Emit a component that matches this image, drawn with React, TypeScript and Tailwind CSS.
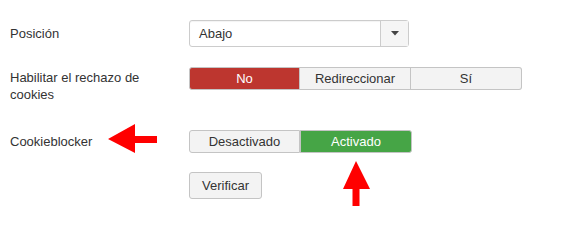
import React from 'react';

const font = { fontFamily: '"Liberation Sans", Arial, sans-serif' };

const btn =
  'flex h-[23px] w-[111px] items-center justify-center border border-[#c4c4c4] text-[13px]';

export default function App() {
  return (
    <div
      className="relative h-[247px] w-[575px] bg-white pl-[10px] pt-[20px] text-[13px] text-[#333]"
      style={font}
    >
      {/* Posición */}
      <div className="flex h-[27px] items-center">
        <div className="w-[179px]">Posición</div>
        <div className="flex h-[27px] w-[220px] items-stretch rounded-[3px] border border-[#ccc] shadow-[inset_0_1px_1px_rgba(0,0,0,0.05)]">
          <div className="flex flex-1 items-center pl-[9px]">Abajo</div>
          <div className="flex w-[28px] items-center justify-center border-l border-[#ccc] bg-[#f5f5f5]">
            <svg width="8" height="5" viewBox="0 0 8 5">
              <path d="M0 0h8L4 4.5z" fill="#444" />
            </svg>
          </div>
        </div>
      </div>

      {/* Rechazo de cookies */}
      <div className="mt-[20px] flex items-start">
        <div className="w-[179px] pt-[2px] leading-[17px]">
          Habilitar el rechazo de
          <br />
          cookies
        </div>
        <div className="flex">
          <div className={`${btn} rounded-l-[3px] border-[#a52a22] bg-[#bd362f] text-white`}>No</div>
          <div className={`${btn} border-l-0 bg-[#f3f3f3]`}>Redireccionar</div>
          <div className={`${btn} rounded-r-[3px] border-l-0 bg-[#f3f3f3]`}>Sí</div>
        </div>
      </div>

      {/* Cookieblocker */}
      <div className="mt-[27px] flex items-center">
        <div className="w-[179px]">Cookieblocker</div>
        <div className="flex">
          <div className={`${btn} rounded-l-[3px] bg-[#f3f3f3]`}>Desactivado</div>
          <div className={`${btn} w-[112px] rounded-r-[3px] border-[#3d8b3d] bg-[#46a546] text-white`}>
            Activado
          </div>
        </div>
      </div>

      <div className="mt-[19px] flex">
        <div className="w-[179px]" />
        <div className="flex h-[27px] w-[73px] items-center justify-center rounded-[3px] border border-[#c4c4c4] bg-[#f3f3f3]">
          Verificar
        </div>
      </div>

      {/* Red arrows */}
      <svg className="absolute left-[106px] top-[122px]" width="54" height="32" viewBox="0 0 54 32">
        <path d="M2 17L29 2V14H51V21H29V31Z" fill="#ff0000" />
      </svg>
      <svg className="absolute left-[341px] top-[159px]" width="32" height="50" viewBox="0 0 32 50">
        <path d="M15 2L29 30H18.5V47H11.5V30H2Z" fill="#ff0000" />
      </svg>
    </div>
  );
}
